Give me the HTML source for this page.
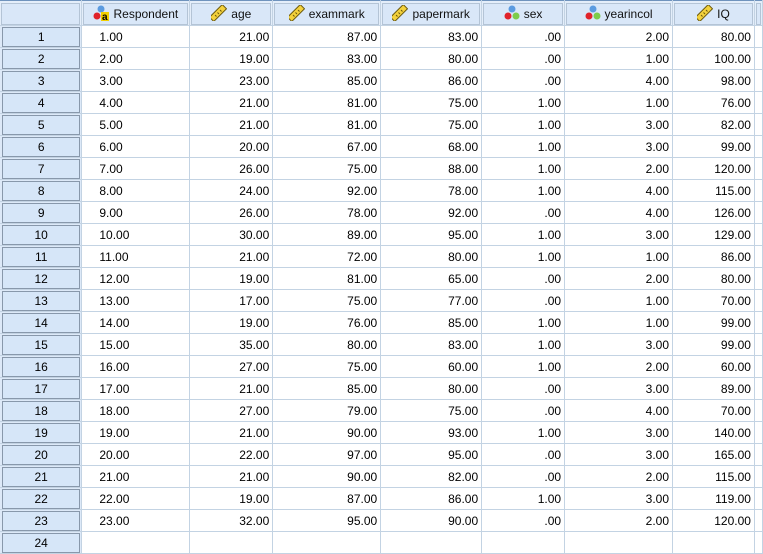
<!DOCTYPE html>
<html><head><meta charset="utf-8"><style>
html,body{margin:0;padding:0;background:#fff;width:763px;height:532px;overflow:hidden;}
body{font-family:"Liberation Sans",Arial,sans-serif;font-size:12px;color:#000;}
table{border-collapse:collapse;table-layout:fixed;position:absolute;left:0;top:0;}
td{padding:0;border-right:1px solid #c3d3e3;border-bottom:1px solid #c3d3e3;height:21px;white-space:nowrap;overflow:hidden;text-align:right;padding-right:3px;}
tr.h td{height:24px;background:#e4eefa;border-top:1px solid #6f93bd;padding:0;}
.hb{margin:1px 1px 0 1px;height:20px;border:1px solid #b4c4d6;background:#d9e7f8;text-align:center;line-height:20px;font-size:12px;color:#111;}
td.rh{background:#dde9f8;padding:0;text-align:center;}
.rb{margin:0 1px 0 2px;height:18px;border:1px solid #8898ab;background:#d6e6f8;line-height:18px;}
td.l{text-align:left;padding-left:17px;padding-right:0;}
svg{vertical-align:-3px;margin-right:4px;}
</style></head><body>
<svg width="0" height="0" style="position:absolute"><defs>
<g id="ru"><rect x="-2" y="5" width="18" height="6" transform="rotate(-45 7 8)" fill="#f4d23c" stroke="#6b5a10" stroke-width="1"/><path d="M4 10l1.5 1.5M6.5 7.5l1.5 1.5M9 5l1.5 1.5" stroke="#6b5a10" stroke-width="1"/></g>
<g id="nm"><circle cx="8" cy="4" r="3.5" fill="#5b9be0"/><circle cx="4" cy="11" r="3.5" fill="#e0222a"/><circle cx="12" cy="11" r="3.5" fill="#7ccc4a"/></g>
<g id="st"><circle cx="8" cy="4" r="3.5" fill="#5b9be0"/><circle cx="4" cy="11" r="3.5" fill="#e0222a"/><rect x="8" y="7" width="8" height="9" fill="#f2d000"/><text x="9" y="15" font-family="Liberation Sans" font-weight="bold" font-size="10" fill="#000">a</text></g>
</defs></svg>
<table>
<colgroup><col style="width:82px"><col style="width:108px"><col style="width:83px"><col style="width:108px"><col style="width:101px"><col style="width:83px"><col style="width:108px"><col style="width:82px"><col style="width:8px"></colgroup>
<tr class="h"><td><div class="hb"></div></td>
<td><div class="hb"><svg width="16" height="16"><use href="#st"/></svg>Respondent</div></td>
<td><div class="hb"><svg width="16" height="16"><use href="#ru"/></svg>age</div></td>
<td><div class="hb"><svg width="16" height="16"><use href="#ru"/></svg>exammark</div></td>
<td><div class="hb"><svg width="16" height="16"><use href="#ru"/></svg>papermark</div></td>
<td><div class="hb"><svg width="16" height="16"><use href="#nm"/></svg>sex</div></td>
<td><div class="hb"><svg width="16" height="16"><use href="#nm"/></svg>yearincol</div></td>
<td><div class="hb"><svg width="16" height="16"><use href="#ru"/></svg>IQ</div></td>
<td><div class="hb"></div></td></tr>
<tr><td class="rh"><div class="rb">1</div></td><td class="l">1.00</td><td>21.00</td><td>87.00</td><td>83.00</td><td>.00</td><td>2.00</td><td>80.00</td><td></td></tr>
<tr><td class="rh"><div class="rb">2</div></td><td class="l">2.00</td><td>19.00</td><td>83.00</td><td>80.00</td><td>.00</td><td>1.00</td><td>100.00</td><td></td></tr>
<tr><td class="rh"><div class="rb">3</div></td><td class="l">3.00</td><td>23.00</td><td>85.00</td><td>86.00</td><td>.00</td><td>4.00</td><td>98.00</td><td></td></tr>
<tr><td class="rh"><div class="rb">4</div></td><td class="l">4.00</td><td>21.00</td><td>81.00</td><td>75.00</td><td>1.00</td><td>1.00</td><td>76.00</td><td></td></tr>
<tr><td class="rh"><div class="rb">5</div></td><td class="l">5.00</td><td>21.00</td><td>81.00</td><td>75.00</td><td>1.00</td><td>3.00</td><td>82.00</td><td></td></tr>
<tr><td class="rh"><div class="rb">6</div></td><td class="l">6.00</td><td>20.00</td><td>67.00</td><td>68.00</td><td>1.00</td><td>3.00</td><td>99.00</td><td></td></tr>
<tr><td class="rh"><div class="rb">7</div></td><td class="l">7.00</td><td>26.00</td><td>75.00</td><td>88.00</td><td>1.00</td><td>2.00</td><td>120.00</td><td></td></tr>
<tr><td class="rh"><div class="rb">8</div></td><td class="l">8.00</td><td>24.00</td><td>92.00</td><td>78.00</td><td>1.00</td><td>4.00</td><td>115.00</td><td></td></tr>
<tr><td class="rh"><div class="rb">9</div></td><td class="l">9.00</td><td>26.00</td><td>78.00</td><td>92.00</td><td>.00</td><td>4.00</td><td>126.00</td><td></td></tr>
<tr><td class="rh"><div class="rb">10</div></td><td class="l">10.00</td><td>30.00</td><td>89.00</td><td>95.00</td><td>1.00</td><td>3.00</td><td>129.00</td><td></td></tr>
<tr><td class="rh"><div class="rb">11</div></td><td class="l">11.00</td><td>21.00</td><td>72.00</td><td>80.00</td><td>1.00</td><td>1.00</td><td>86.00</td><td></td></tr>
<tr><td class="rh"><div class="rb">12</div></td><td class="l">12.00</td><td>19.00</td><td>81.00</td><td>65.00</td><td>.00</td><td>2.00</td><td>80.00</td><td></td></tr>
<tr><td class="rh"><div class="rb">13</div></td><td class="l">13.00</td><td>17.00</td><td>75.00</td><td>77.00</td><td>.00</td><td>1.00</td><td>70.00</td><td></td></tr>
<tr><td class="rh"><div class="rb">14</div></td><td class="l">14.00</td><td>19.00</td><td>76.00</td><td>85.00</td><td>1.00</td><td>1.00</td><td>99.00</td><td></td></tr>
<tr><td class="rh"><div class="rb">15</div></td><td class="l">15.00</td><td>35.00</td><td>80.00</td><td>83.00</td><td>1.00</td><td>3.00</td><td>99.00</td><td></td></tr>
<tr><td class="rh"><div class="rb">16</div></td><td class="l">16.00</td><td>27.00</td><td>75.00</td><td>60.00</td><td>1.00</td><td>2.00</td><td>60.00</td><td></td></tr>
<tr><td class="rh"><div class="rb">17</div></td><td class="l">17.00</td><td>21.00</td><td>85.00</td><td>80.00</td><td>.00</td><td>3.00</td><td>89.00</td><td></td></tr>
<tr><td class="rh"><div class="rb">18</div></td><td class="l">18.00</td><td>27.00</td><td>79.00</td><td>75.00</td><td>.00</td><td>4.00</td><td>70.00</td><td></td></tr>
<tr><td class="rh"><div class="rb">19</div></td><td class="l">19.00</td><td>21.00</td><td>90.00</td><td>93.00</td><td>1.00</td><td>3.00</td><td>140.00</td><td></td></tr>
<tr><td class="rh"><div class="rb">20</div></td><td class="l">20.00</td><td>22.00</td><td>97.00</td><td>95.00</td><td>.00</td><td>3.00</td><td>165.00</td><td></td></tr>
<tr><td class="rh"><div class="rb">21</div></td><td class="l">21.00</td><td>21.00</td><td>90.00</td><td>82.00</td><td>.00</td><td>2.00</td><td>115.00</td><td></td></tr>
<tr><td class="rh"><div class="rb">22</div></td><td class="l">22.00</td><td>19.00</td><td>87.00</td><td>86.00</td><td>1.00</td><td>3.00</td><td>119.00</td><td></td></tr>
<tr><td class="rh"><div class="rb">23</div></td><td class="l">23.00</td><td>32.00</td><td>95.00</td><td>90.00</td><td>.00</td><td>2.00</td><td>120.00</td><td></td></tr>
<tr><td class="rh"><div class="rb">24</div></td><td class="l"></td><td></td><td></td><td></td><td></td><td></td><td></td><td></td></tr>
</table>
</body></html>
